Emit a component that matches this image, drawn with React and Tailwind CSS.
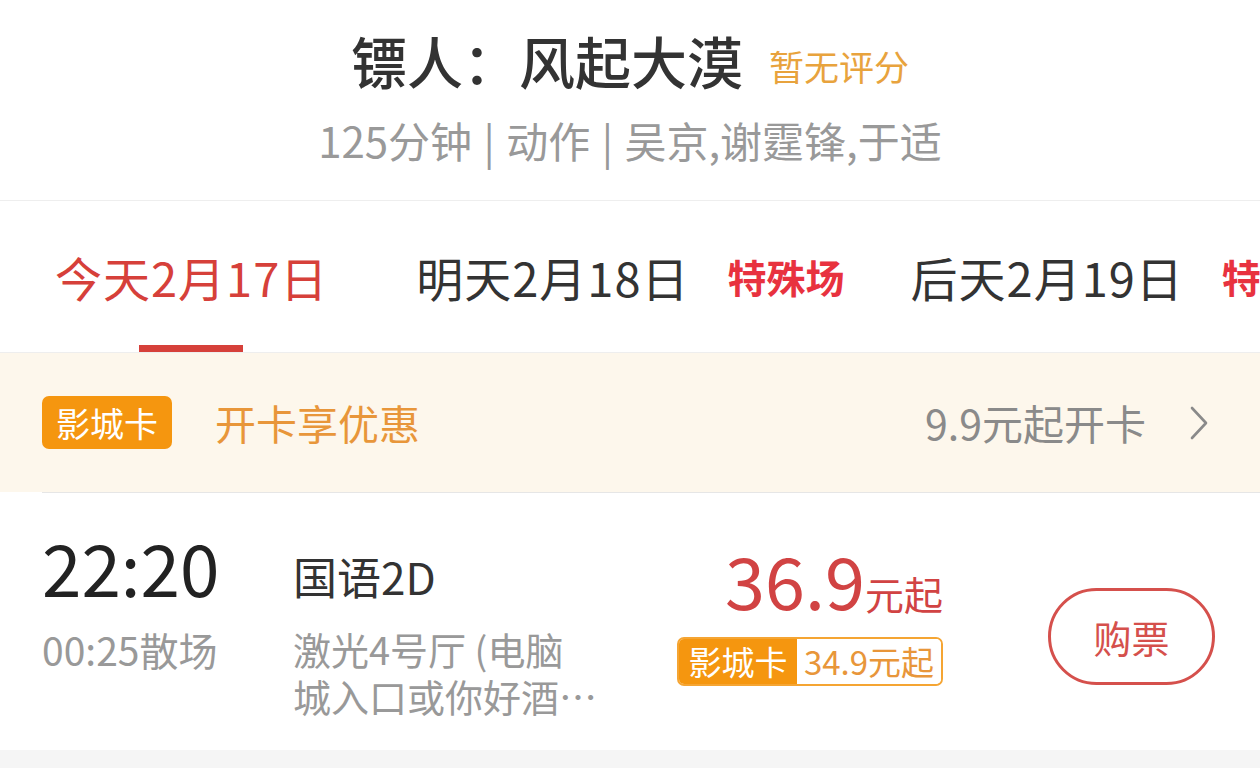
import React from 'react';

const font = "font-['Noto_Sans_CJK_SC','Noto_Sans',sans-serif]";

function DateTab({ label, active, tag }) {
  return (
    <div className="relative h-full flex items-center">
      <span className={`text-[47px] tracking-[1px] leading-none ${active ? 'text-[#d6403a]' : 'text-[#333]'}`}>{label}</span>
      {tag && <span className="ml-[38px] text-[39px] leading-none font-bold text-[#e8323f]">{tag}</span>}
      {active && <span className="absolute bottom-0 left-[84px] w-[104px] h-[7px] bg-[#d6403a]" />}
    </div>
  );
}

export default function App() {
  return (
    <div className={`w-[1260px] h-[768px] bg-white overflow-hidden flex flex-col ${font}`}>
      {/* movie header */}
      <div className="h-[200px] flex flex-col items-center">
        <div className="mt-[20px] h-[80px] flex items-center gap-[26px]">
          <span className="text-[56px] font-medium text-[#333] leading-none">镖人：风起大漠</span>
          <span className="text-[35px] text-[#e8a33d] leading-none mt-[10px]">暂无评分</span>
        </div>
        <div className="mt-[20px] h-[40px] flex items-center text-[42px] text-[#999] leading-none [word-spacing:2px]">
          125分钟 | 动作 | 吴京,谢霆锋,于适
        </div>
      </div>

      {/* date tabs */}
      <div className="h-[153px] border-t border-b border-[#eeeeee] flex items-stretch pl-[55px] overflow-hidden whitespace-nowrap">
        <DateTab label="今天2月17日" active />
        <div className="ml-[88px] h-full"><DateTab label="明天2月18日" tag="特殊场" /></div>
        <div className="ml-[66px] h-full"><DateTab label="后天2月19日" tag="特殊场" /></div>
      </div>

      {/* card banner */}
      <div className="h-[139px] bg-[#fdf7ec] flex items-center pl-[42px] pr-[50px]">
        <span className="h-[53px] w-[130px] rounded-[7px] bg-[#f5960f] text-white text-[34px] leading-none flex items-center justify-center">影城卡</span>
        <span className="ml-[43px] text-[41px] text-[#e8963a] leading-none">开卡享优惠</span>
        <span className="ml-auto text-[41px] text-[#8a8a8a] leading-none">9.9元起开卡</span>
        <svg className="ml-[42px]" width="22" height="36" viewBox="0 0 22 36" fill="none">
          <polyline points="4,3 18,18 4,33" stroke="#8a8a8a" strokeWidth="2.6" strokeLinecap="round" strokeLinejoin="round" />
        </svg>
      </div>

      {/* showtime row */}
      <div className="ml-[42px] h-[258px] border-t border-[#e6e6e6] flex items-start">
        <div className="w-[251px] pt-[38px] flex flex-col">
          <span className="h-[70px] leading-[70px] text-[71px] text-[#222]">22:20</span>
          <span className="mt-[25px] h-[46px] leading-[46px] text-[39px] text-[#999]">00:25散场</span>
        </div>
        <div className="w-[330px] pt-[58px] flex flex-col">
          <span className="h-[50px] leading-[50px] text-[44px] text-[#333]">国语2D</span>
          <div className="mt-[24px] text-[38px] leading-[47px] text-[#999]">
            <div>激光4号厅 (电脑</div>
            <div>城入口或你好酒…</div>
          </div>
        </div>
        <div className="w-[320px] pt-[50px] flex flex-col items-end">
          <div className="h-[72px] flex items-baseline text-[#d14343] leading-none">
            <span className="text-[72px]">36.9</span>
            <span className="text-[39px]">元起</span>
          </div>
          <div className="mt-[22px] h-[49px] flex rounded-[7px] border-2 border-[#f5a533] overflow-hidden text-[33px] leading-none">
            <span className="w-[118px] bg-[#f5960f] text-white flex items-center justify-center">影城卡</span>
            <span className="px-[7px] bg-white text-[#e8963a] flex items-center">34.9元起</span>
          </div>
        </div>
        <button className="mt-[95px] ml-[105px] w-[167px] h-[97px] rounded-full border-[3px] border-[#d5504c] text-[#d5504c] text-[38px] leading-none flex items-center justify-center">
          购票
        </button>
      </div>

      <div className="flex-1 bg-[#f5f5f5]" />
    </div>
  );
}
